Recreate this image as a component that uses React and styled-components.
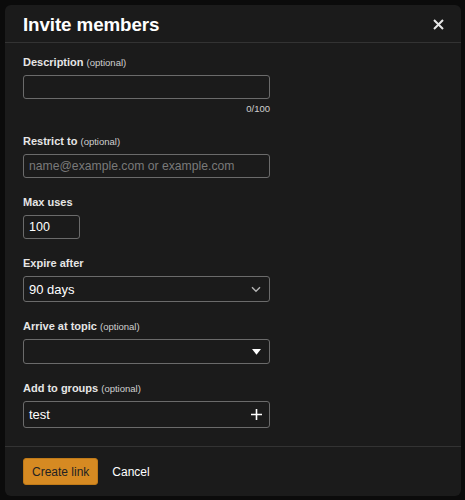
import React, { useState } from 'react'
import styled, { createGlobalStyle } from 'styled-components'

const GlobalStyle = createGlobalStyle`
  html, body {
    margin: 0;
    background: #0b0b0b;
    font-family: 'Liberation Sans', Arial, sans-serif;
  }
`

const Page = styled.div`
  padding: 5px 4px 4px 5px;
`

const Modal = styled.div`
  background: #1b1b1b;
  border-radius: 6px;
  width: 456px;
  height: 491px;
  display: flex;
  flex-direction: column;
  color: #fff;
`

const Header = styled.div`
  height: 40px;
  display: flex;
  align-items: center;
  justify-content: space-between;
  padding: 0 17px 0 18px;
  border-bottom: 1px solid #333;
`

const Title = styled.h1`
  margin: 2px 0 0;
  font-size: 18.8px;
  font-weight: bold;
  letter-spacing: -0.1px;
`

const CloseButton = styled.button`
  background: none;
  border: none;
  padding: 0;
  width: 12px;
  height: 12px;
  margin-top: 2px;
  display: flex;
  align-items: center;
  justify-content: center;
  cursor: pointer;
`

const Body = styled.div`
  flex: 1;
  padding: 13px 18px 0;
  display: flex;
  flex-direction: column;
`

const Field = styled.div`
  display: flex;
  flex-direction: column;
  margin-bottom: ${(p) => p.gap || 18}px;
`

const Label = styled.label`
  font-size: 11px;
  font-weight: bold;
  color: #e6e6e6;
  margin-bottom: 6px;
  line-height: 13px;
`

const Optional = styled.span`
  font-size: 9.5px;
  font-weight: normal;
  color: #d0d0d0;
`

const Input = styled.input`
  box-sizing: border-box;
  width: ${(p) => p.w || 247}px;
  height: ${(p) => p.h || 24}px;
  background: #1b1b1b;
  border: 1px solid #6b6b6b;
  border-radius: 3px;
  color: #fff;
  font-family: inherit;
  font-size: 12.5px;
  padding: 0 5px;
  outline: none;

  &::placeholder {
    color: #7a7a7a;
    font-size: 12.2px;
  }
`

const Counter = styled.div`
  width: 247px;
  text-align: right;
  font-size: 9.5px;
  color: #cfcfcf;
  margin-top: 4px;
`

const Select = styled.div`
  box-sizing: border-box;
  width: 247px;
  height: ${(p) => p.h || 26}px;
  border: 1px solid #6b6b6b;
  border-radius: 3px;
  display: flex;
  align-items: center;
  justify-content: space-between;
  padding: 0 7px 0 5px;
  font-size: 13px;
  color: #fff;
`

const Footer = styled.div`
  border-top: 1px solid #333;
  height: 52px;
  display: flex;
  align-items: center;
  padding: 0 18px;
  gap: 14px;
`

const PrimaryButton = styled.button`
  background: #d68a22;
  border: 1px solid #c07a18;
  border-radius: 3px;
  height: 27px;
  padding: 0 8px;
  font-family: inherit;
  font-size: 12px;
  color: #222;
  cursor: pointer;
`

const TextButton = styled.button`
  background: none;
  border: none;
  padding: 0;
  color: #fff;
  font-family: inherit;
  font-size: 12px;
  cursor: pointer;
`

const Chevron = () => (
  <svg width="10" height="7" viewBox="0 0 10 7" style={{ marginRight: 1 }}>
    <path d="M1 1.2 L5 5.2 L9 1.2" fill="none" stroke="#b5b5b5" strokeWidth="1.4" />
  </svg>
)

const Caret = () => (
  <svg width="9" height="6" viewBox="0 0 9 6" style={{ marginRight: 1 }}>
    <path d="M0 0 H9 L4.5 5.8 Z" fill="#fff" />
  </svg>
)

const Plus = () => (
  <svg width="11" height="11" viewBox="0 0 11 11">
    <path d="M5.5 0 V11 M0 5.5 H11" stroke="#fff" strokeWidth="1.6" />
  </svg>
)

const Cross = () => (
  <svg width="11" height="11" viewBox="0 0 11 11">
    <path d="M1 1 L10 10 M10 1 L1 10" stroke="#e8e8e8" strokeWidth="2" />
  </svg>
)

const App = () => {
  const [description, setDescription] = useState('')
  const [maxUses, setMaxUses] = useState('100')

  return (
    <Page>
      <GlobalStyle />
      <Modal>
        <Header>
          <Title>Invite members</Title>
          <CloseButton>
            <Cross />
          </CloseButton>
        </Header>
        <Body>
          <Field gap={21}>
            <Label>
              Description <Optional>(optional)</Optional>
            </Label>
            <Input
              value={description}
              onChange={(e) => setDescription(e.target.value)}
            />
            <Counter>{description.length}/100</Counter>
          </Field>
          <Field>
            <Label>
              Restrict to <Optional>(optional)</Optional>
            </Label>
            <Input placeholder="name@example.com or example.com" />
          </Field>
          <Field>
            <Label>Max uses</Label>
            <Input w={57} value={maxUses} onChange={(e) => setMaxUses(e.target.value)} />
          </Field>
          <Field>
            <Label>Expire after</Label>
            <Select>
              90 days
              <Chevron />
            </Select>
          </Field>
          <Field>
            <Label>
              Arrive at topic <Optional>(optional)</Optional>
            </Label>
            <Select h={25}>
              <span />
              <Caret />
            </Select>
          </Field>
          <Field>
            <Label>
              Add to groups <Optional>(optional)</Optional>
            </Label>
            <Select h={27}>
              test
              <Plus />
            </Select>
          </Field>
        </Body>
        <Footer>
          <PrimaryButton>Create link</PrimaryButton>
          <TextButton>Cancel</TextButton>
        </Footer>
      </Modal>
    </Page>
  )
}

export default App
